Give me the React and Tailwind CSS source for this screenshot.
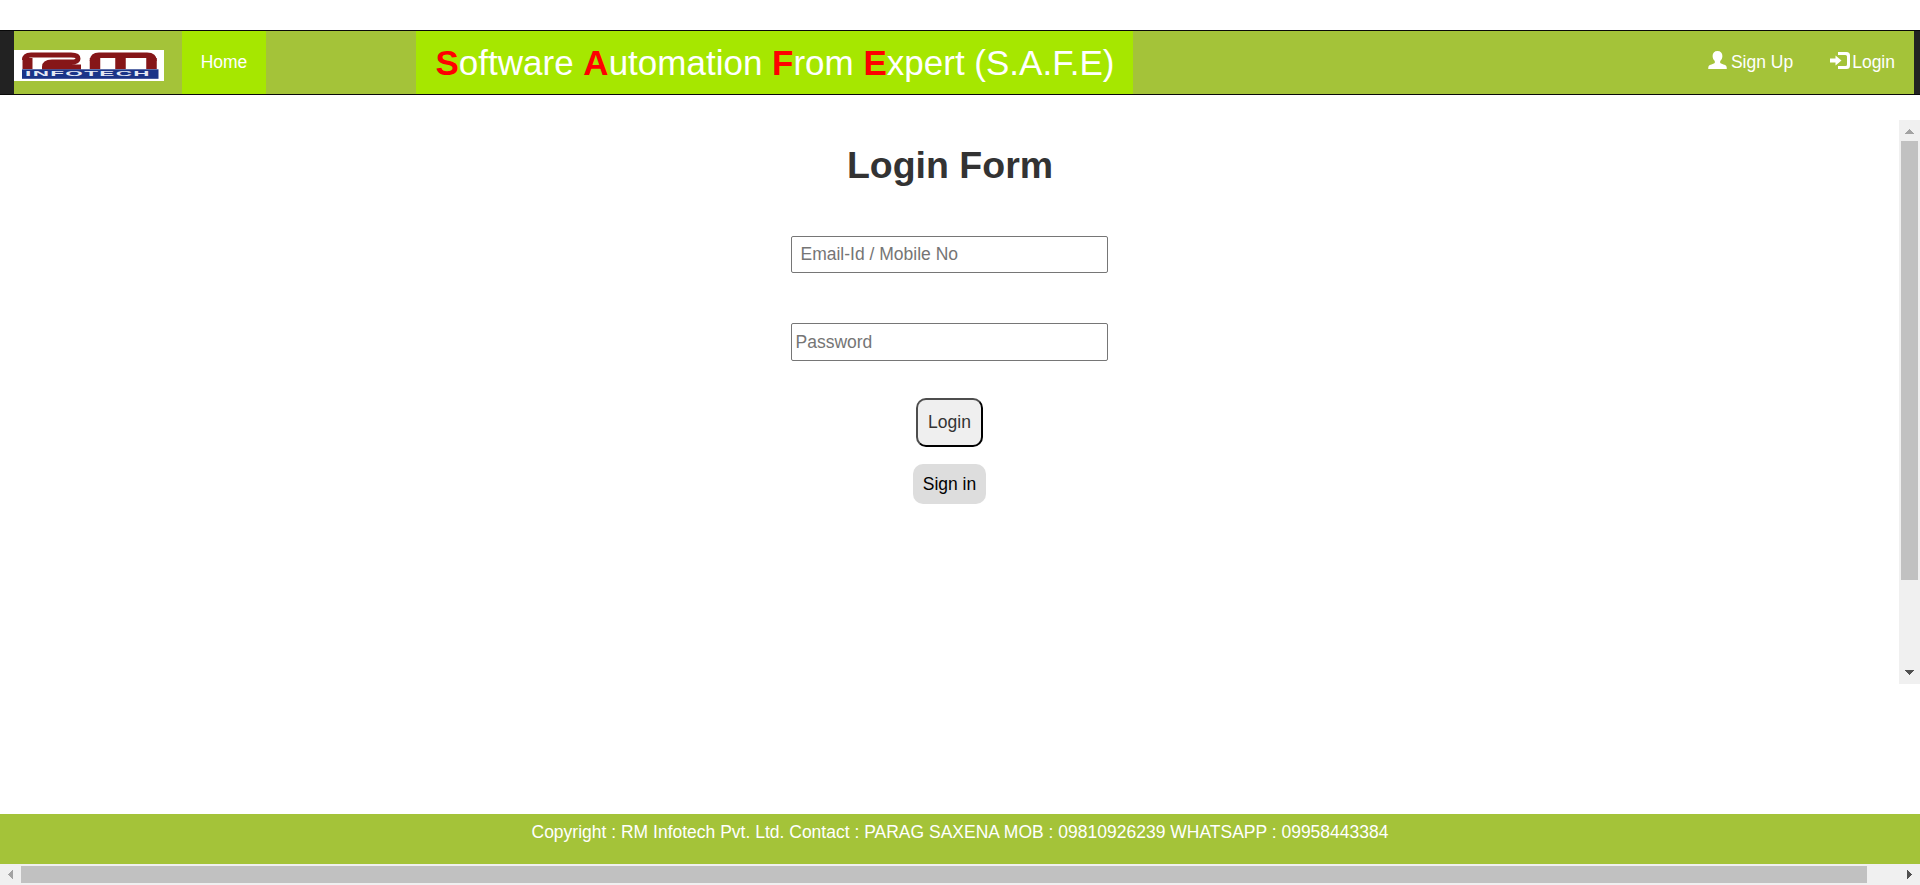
function Logo() {
  return (
    <svg width="150" height="31" viewBox="0 0 150 31" className="mt-[6px] shrink-0">
      <rect width="150" height="31" fill="#fff" />
      <g fill="none" stroke="#861618">
        <path d="M13.500 19V8" strokeWidth="10" />
        <path d="M10.500 10Q10.500 5 17 5H57Q64 5 64 8.700Q64 12 57 12H38Q30.500 12 30.500 17H67" strokeWidth="5" />
        <path d="M81 19V8M106.500 19V5M137.500 19V8" strokeWidth="10.500" />
        <path d="M78.500 11Q78.500 5.300 85 5.300H133Q140 5.300 140 11" strokeWidth="5.600" />
      </g>
      <rect x="8" y="19.300" width="136.500" height="9.500" fill="#1b3488" />
      <text x="11" y="26.400" textLength="126" lengthAdjust="spacingAndGlyphs" fontFamily="Liberation Sans, sans-serif" fontWeight="700" fontSize="6.500" letterSpacing="0.400" fill="#e4e8f3">INFOTECH</text>
    </svg>
  );
}

function UserIcon() {
  return (
    <svg width="19" height="18" viewBox="0 0 19 18" fill="currentColor" className="mb-[5px]">
      <path d="M9.500 0C6.300 0 4.600 2 4.600 5C4.600 7 5.500 9 6.800 10V12C5 13.200 1.800 13.500 .7 15Q.2 16 .2 18H18.800Q18.800 16 18.300 15C17.200 13.500 14 13.200 12.200 12V10C13.500 9 14.400 7 14.400 5C14.400 2 12.700 0 9.500 0Z" />
    </svg>
  );
}

function LoginIcon() {
  return (
    <svg width="20" height="17" viewBox="0 0 20 17" fill="currentColor" className="mb-[4px]">
      <path d="M8 0H16.500Q20 0 20 3.500V13.500Q20 17 16.500 17H8V14H15.500Q17 14 17 12.500V4.500Q17 3 15.500 3H8Z" />
      <path d="M5.500 3.500L11.500 8.500L5.500 13.500V10.500H0V6.500H5.500Z" />
    </svg>
  );
}

function Initial({ children }) {
  return <b className="font-bold text-[#ff0000]">{children}</b>;
}

function Navbar() {
  return (
    <nav className="h-[65px] border-y border-[#080808] bg-[#222] pl-[14px] pr-[6px]">
      <div className="flex h-full items-center bg-[#a4c339] text-white">
        <Logo />
        <a className="ml-[18px] flex h-full w-[84px] items-center justify-center bg-[#a6e700]">Home</a>
        <a className="ml-[150px] flex h-full w-[717px] items-center whitespace-pre bg-[#a6e700] pl-[19.5px] text-[35px]">
          <span>
            <Initial>S</Initial>oftware <Initial>A</Initial>utomation <Initial>F</Initial>rom <Initial>E</Initial>xpert (S.A.F.E)
          </span>
        </a>
        <div className="ml-auto flex items-center pr-[19px]">
          <a className="flex items-center gap-1">
            <UserIcon />
            Sign Up
          </a>
          <a className="ml-[37px] flex items-center gap-[2px]">
            <LoginIcon />
            Login
          </a>
        </div>
      </div>
    </nav>
  );
}

function VerticalScrollbar() {
  return (
    <div className="flex w-[21px] flex-col items-center bg-[#f0f0f0]">
      <svg width="21" height="21" viewBox="0 0 21 21" shapeRendering="crispEdges">
        <path d="M6 14H15L10.500 9Z" fill="#a3a3a3" />
      </svg>
      <div className="h-[439px] w-[17px] bg-[#c1c1c1]" />
      <svg className="mt-auto" width="21" height="21" viewBox="0 0 21 21" shapeRendering="crispEdges">
        <path d="M6 7H15L10.500 12Z" fill="#505050" />
      </svg>
    </div>
  );
}

function HorizontalScrollbar() {
  return (
    <div className="flex h-[21px] items-center bg-[#f0f0f0]">
      <svg width="21" height="21" viewBox="0 0 21 21" shapeRendering="crispEdges">
        <path d="M13 6V15L8 10.500Z" fill="#a3a3a3" />
      </svg>
      <div className="h-[17px] w-[1846px] bg-[#c1c1c1]" />
      <svg className="ml-auto" width="21" height="21" viewBox="0 0 21 21" shapeRendering="crispEdges">
        <path d="M8 6V15L13 10.500Z" fill="#505050" />
      </svg>
    </div>
  );
}

export default function App() {
  return (
    <div className="flex h-[885px] w-[1920px] flex-col overflow-hidden bg-white pt-[30px] font-['Liberation_Sans',Arial,sans-serif] text-[17.5px] leading-[25px] text-[#333]">
      <Navbar />
      <main className="mt-[25px] flex h-[564px]">
        <form className="flex flex-1 flex-col items-center">
          <h1 className="mt-[25px] pl-px text-[37.5px] font-bold leading-[41px]">Login Form</h1>
          <input className="mt-[50px] h-[37px] w-[317px] rounded-[2px] border border-[#767676] pl-[8.5px] placeholder:text-[#757575]" placeholder="Email-Id / Mobile No" />
          <input type="password" className="mt-[50px] h-[38px] w-[317px] rounded-[2px] border border-[#767676] pl-[3.5px] placeholder:text-[#757575]" placeholder="Password" />
          <button type="button" className="mt-[37px] h-[49px] w-[67px] rounded-[10px] border-2 border-b-black border-l-[#4d4d4d] border-r-black border-t-[#4d4d4d] bg-[#efefef]">Login</button>
          <button type="button" className="mt-[17px] h-[40px] w-[73px] rounded-[10px] bg-[#ddd] text-black">Sign in</button>
        </form>
        <VerticalScrollbar />
      </main>
      <footer className="mt-auto h-[50px] bg-[#a4c339] pt-[6px] text-center text-white">
        Copyright : RM Infotech Pvt. Ltd. Contact : PARAG SAXENA MOB : 09810926239 WHATSAPP : 09958443384
      </footer>
      <HorizontalScrollbar />
    </div>
  );
}
